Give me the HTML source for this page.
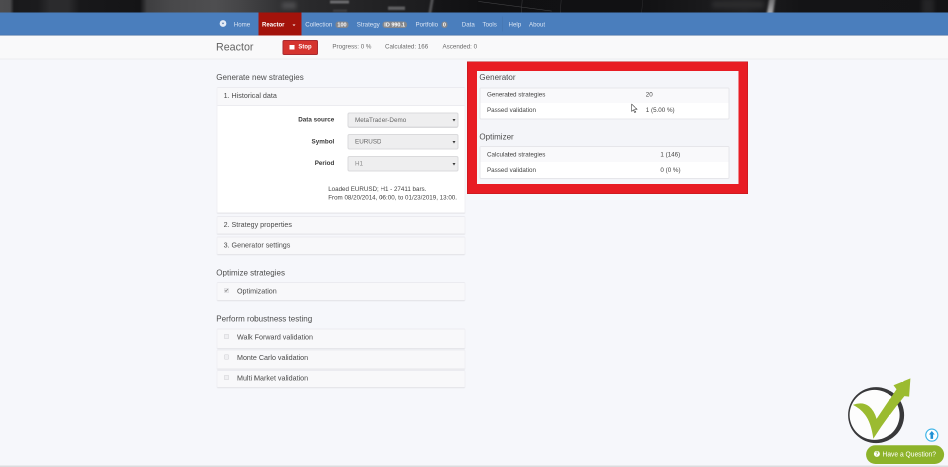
<!DOCTYPE html>
<html lang="en">
<head>
<meta charset="utf-8">
<title>Reactor</title>
<style>
*{box-sizing:border-box;margin:0;padding:0}
html,body{width:948px;height:467px;overflow:hidden}
body{position:relative;background:#f6f7fb;font-family:"Liberation Sans",Arial,sans-serif;color:#444;font-size:6.9px;line-height:1}
.abs{position:absolute;white-space:nowrap}
/* top dark strip */
#top{left:0;top:0;width:948px;height:13px;background:#141416;overflow:hidden}
#top div{position:absolute}
/* nav */
#nav{left:0;top:12.5px;width:948px;height:23px;background:#4a7ebd;box-shadow:inset 0 -0.6px 0 #41699c}
.nv{position:absolute;top:0;height:24px;line-height:24px;color:#d9e4f3;font-size:6.15px;white-space:nowrap}
.bdg{position:absolute;top:8.9px;height:6.4px;line-height:6.5px;border-radius:2.8px;background:#84868b;color:#fff;font-weight:bold;font-size:5.5px;text-align:center}
#sub{left:0;top:35.5px;width:948px;height:24.2px;background:#f9f9fa;border-bottom:1px solid #ececef}
.h1{font-size:10.7px;color:#636363}
.h2{font-size:8.03px;color:#4e4e4e}
.t{font-size:7.15px;color:#4a4a4a}
.d{font-size:6.25px;color:#444}
.st{font-size:6.22px;color:#6a6a6a}
.pnl{left:216.5px;width:249px;background:#f8f8fa;border:1px solid #ebebf0;border-left-color:#f0f0f4;border-right-color:#f0f0f4;border-bottom-color:#e6e6ea;border-radius:1.5px;box-shadow:0 0.5px 0.5px rgba(0,0,0,.04)}
.sel{left:347.5px;width:111px;height:15.4px;background:#eeeeef;border:1px solid #dadadc;border-radius:2px}
.sel span{position:absolute;left:6.5px;top:-0.5px;line-height:14.4px;font-size:6.3px;color:#666}
.sel i{position:absolute;right:1.9px;top:5.7px;width:0;height:0;border-left:1.5px solid transparent;border-right:1.5px solid transparent;border-top:2.6px solid #3a3a3a}
.lbl{font-weight:bold;font-size:6.3px;color:#3a3a3a;right:613.7px}
.cb{width:5px;height:5px;border:0.6px solid #d2d2d6;border-radius:1px;background:#efeff2;left:223.8px}
.tbl{left:479.5px;width:250.2px;background:#fff;border:1px solid #e6e6ea;border-radius:1.5px}
.row1{left:0;top:0;width:100%;height:14.5px;background:#f9f9fb}
#wrap{position:absolute;left:0;top:0;width:1896px;height:934px;transform:scale(.5);transform-origin:0 0;will-change:transform;overflow:hidden}
#z{position:absolute;left:0;top:0;width:948px;height:467px;zoom:2;background:#f6f7fb}
</style>
</head>
<body>
<div id="wrap"><div id="z">

<!-- dark blurred strip -->
<div id="top" class="abs">
  <div style="left:0;top:0;width:948px;height:13px;background:linear-gradient(90deg,#4c4c4e 0,#4a4a4c 10px,#19191b 14px,#1b1b1d 38px,#2b2b2d 50px,#2b2b2d 68px,#18181a 80px,#141416 140px,#3e3e40 147px,#48484a 170px,#4e4e50 215px,#454547 240px,#3a3a3c 262px,#2f2f31 285px,#29292b 310px,#252527 350px,#1f1f21 400px,#1c1c1e 428px,#151517 436px,#101012 480px,#111113 640px,#19191b 700px,#222224 745px,#1a1a1c 765px,#141416 800px,#131315 948px)"></div>
  <div style="left:768px;top:-2px;width:6px;height:17px;background:linear-gradient(180deg,#6a6a6c,#b4b4b6);transform:skewX(-9deg);filter:blur(1px)"></div>
  <div style="left:712px;top:1px;width:52px;height:7px;background:#2c2c2e;filter:blur(2.500px)"></div>
  <div style="left:429.5px;top:-2px;width:3.200px;height:17px;background:#505052;transform:skewX(-10deg);filter:blur(.7px)"></div>
  <div style="left:330px;top:0.5px;width:19px;height:3px;background:#6c6c6e;filter:blur(.9px)"></div>
  <div style="left:388px;top:6.5px;width:17px;height:3.6px;background:#5e5e60;filter:blur(.9px)"></div>
  <div style="left:333px;top:9.5px;width:14px;height:2.5px;background:#3c3c3e;filter:blur(.9px)"></div>
  <div style="left:282px;top:2px;width:14px;height:7px;background:#4c4c4e;filter:blur(2px)"></div>
  <div style="left:478px;top:6.2px;width:74px;height:0.7px;background:#48484a;transform:rotate(7.5deg);filter:blur(.3px)"></div>
  <div style="left:521.6px;top:-2px;width:0.7px;height:16px;background:#3e3e40;transform:skewX(-4deg)"></div>
  <div style="left:560.6px;top:-2px;width:0.7px;height:16px;background:#38383a;transform:skewX(-4deg)"></div>
  <div style="left:642px;top:-2px;width:0.7px;height:16px;background:#2e2e30;transform:skewX(-6deg)"></div>
  <div style="left:922px;top:-2px;width:12px;height:16px;background:#242426;filter:blur(2px)"></div>
</div>

<!-- navbar -->
<div id="nav" class="abs">
  <svg class="abs" style="left:219.7px;top:7.7px" width="7" height="7" viewBox="0 0 14 14"><circle cx="7" cy="7" r="6.7" fill="#e3ebf6"/><path d="M4.4 5.6h5.2L7 8.8z" fill="#4a72a8"/></svg>
  <span class="nv" style="left:233.8px">Home</span>
  <div class="abs" style="left:258.5px;top:0;width:43px;height:23px;background:#a3130b"></div>
  <span class="nv" style="left:262px;color:#fff;font-weight:bold;font-size:6.05px">Reactor</span>
  <i class="abs" style="left:292.7px;top:11.8px;width:0;height:0;border-left:1.7px solid transparent;border-right:1.7px solid transparent;border-top:1.9px solid #fff"></i>
  <span class="nv" style="left:305.3px">Collection</span>
  <span class="bdg" style="left:335.4px;width:13.2px">100</span>
  <span class="nv" style="left:356.8px">Strategy</span>
  <span class="bdg" style="left:382.6px;width:24.2px">ID 990.1</span>
  <span class="nv" style="left:415.5px">Portfolio</span>
  <span class="bdg" style="left:441.3px;width:6.2px">0</span>
  <span class="nv" style="left:461.8px">Data</span>
  <span class="nv" style="left:482.5px">Tools</span>
  <div class="abs" style="left:502.3px;top:4px;width:0.6px;height:15px;background:#4371ab"></div>
  <span class="nv" style="left:508.5px">Help</span>
  <span class="nv" style="left:529px">About</span>
</div>

<!-- sub header -->
<div id="sub" class="abs"></div>
<span class="abs h1" style="left:216px;top:41.8px">Reactor</span>
<div class="abs" style="left:282.3px;top:39.9px;width:35.6px;height:15.2px;background:#d5342f;border:1px solid #a82a30;border-radius:1.6px"></div>
<div class="abs" style="left:289.6px;top:44.8px;width:4.8px;height:4.6px;background:#fff"></div>
<span class="abs" style="left:298.4px;top:43.9px;font-size:5.95px;font-weight:bold;color:#fff">Stop</span>
<span class="abs st" style="left:332.4px;top:43.6px">Progress: 0 %</span>
<span class="abs st" style="left:385px;top:43.6px">Calculated: 166</span>
<span class="abs st" style="left:442.5px;top:43.6px">Ascended: 0</span>

<!-- left column -->
<span class="abs h2" style="left:216.3px;top:72.95px">Generate new strategies</span>

<div class="abs pnl" style="top:87px;height:126.7px;background:#fff"></div>
<div class="abs" style="left:217.5px;top:88px;width:247px;height:18px;background:#f8f8fa;border-bottom:1px solid #ececf0"></div>
<span class="abs t" style="left:223.6px;top:92.10px">1. Historical data</span>

<span class="abs lbl" style="top:116.60px">Data source</span>
<div class="abs sel" style="top:112.3px"><span>MetaTrader-Demo</span><i></i></div>
<span class="abs lbl" style="top:138.30px">Symbol</span>
<div class="abs sel" style="top:134.1px"><span>EURUSD</span><i></i></div>
<span class="abs lbl" style="top:160.10px">Period</span>
<div class="abs sel" style="top:156.1px"><span style="color:#888">H1</span><i></i></div>

<span class="abs" style="left:328.2px;top:186.10px;font-size:6.23px;color:#444">Loaded EURUSD; H1 - 27411 bars.</span>
<span class="abs" style="left:328.2px;top:194.30px;font-size:6.23px;color:#444">From 08/20/2014, 06:00, to 01/23/2019, 13:00.</span>

<div class="abs pnl" style="top:216.2px;height:18.4px"></div>
<span class="abs t" style="left:223.6px;top:221.10px">2. Strategy properties</span>
<div class="abs pnl" style="top:236.4px;height:18.4px"></div>
<span class="abs t" style="left:223.6px;top:241.35px">3. Generator settings</span>

<span class="abs h2" style="left:216.3px;top:268.30px">Optimize strategies</span>
<div class="abs pnl" style="top:282.2px;height:18.6px"></div>
<div class="abs cb" style="top:288px"></div>
<svg class="abs" style="left:224.2px;top:288.2px" width="4.6" height="4.6" viewBox="0 0 10 10"><path d="M2 5.2l2.2 2.4L8.2 2.4" fill="none" stroke="#777" stroke-width="1.6"/></svg>
<span class="abs t" style="left:237px;top:287.55px">Optimization</span>

<span class="abs h2" style="left:216.3px;top:314.45px">Perform robustness testing</span>
<div class="abs pnl" style="top:328.4px;height:20.4px"></div>
<div class="abs cb" style="top:333.8px"></div>
<span class="abs t" style="left:237px;top:333.50px">Walk Forward validation</span>
<div class="abs pnl" style="top:349.5px;height:19.8px"></div>
<div class="abs cb" style="top:354.4px"></div>
<span class="abs t" style="left:237px;top:353.80px">Monte Carlo validation</span>
<div class="abs pnl" style="top:369.9px;height:18px"></div>
<div class="abs cb" style="top:374.8px"></div>
<span class="abs t" style="left:237px;top:374.30px">Multi Market validation</span>

<!-- red highlight frame -->
<div class="abs" style="left:466.8px;top:61.25px;width:281.2px;height:132.55px;background:#e81c24;box-shadow:inset 0 0 0 0.5px #b8181e"></div>
<div class="abs" style="left:477px;top:71px;width:261.25px;height:112.75px;background:#f4f5f9"></div>

<span class="abs h2" style="left:479.4px;top:72.80px">Generator</span>
<div class="abs tbl" style="top:87.3px;height:32.2px"><div class="abs row1"></div></div>
<span class="abs d" style="left:487px;top:91.30px">Generated strategies</span>
<span class="abs d" style="left:645.8px;top:91.30px">20</span>
<span class="abs d" style="left:487px;top:106.80px">Passed validation</span>
<span class="abs d" style="left:645.8px;top:106.80px">1 (5.00 %)</span>

<span class="abs h2" style="left:479.4px;top:132.45px">Optimizer</span>
<div class="abs tbl" style="top:146.2px;height:33px"><div class="abs row1" style="height:15px"></div></div>
<span class="abs d" style="left:487px;top:151.55px">Calculated strategies</span>
<span class="abs d" style="left:660.4px;top:151.55px">1 (146)</span>
<span class="abs d" style="left:487px;top:166.80px">Passed validation</span>
<span class="abs d" style="left:660.4px;top:166.80px">0 (0 %)</span>

<!-- mouse cursor -->
<svg class="abs" style="left:631px;top:103.6px" width="7.2" height="10" viewBox="0 0 12 17"><path d="M1 1v12.500l3.100-2.800 2.100 4.800 1.900-.9-2.100-4.600H10.300z" fill="#fff" stroke="#3a3a3a" stroke-width="1" stroke-linejoin="round"/></svg>

<!-- logo -->
<svg class="abs" style="left:838px;top:370px" width="110" height="97" viewBox="838 370 110 97">
  <circle cx="876.1" cy="415.1" r="28" fill="#38383a"/>
  <circle cx="874.6" cy="414.9" r="25" fill="#fdfdfd"/>
  <path d="M910.4 378.4L909.1 396.6L904.4 396.1Q887.5 416.500 873.3 438.7Q871.200 422.500 865 414.6Q860 408.200 852.9 404.9Q862.300 401.200 869 406.2Q874.300 410.500 876.6 418.9L896.5 389.3L893.5 385.2Z" fill="#9bbb30"/>
  <circle cx="931.8" cy="435.1" r="6.9" fill="#d4eefb"/>
  <circle cx="931.8" cy="435.1" r="6" fill="#fff" stroke="#3bb2e6" stroke-width="1.1"/>
  <path d="M931.8 431l2.9 3.500h-1.600v4.400h-2.600v-4.400h-1.600z" fill="#2191d5"/>
  <rect x="866.1" y="445.2" width="78" height="18.800" rx="9.400" fill="#8db32a"/>
  <circle cx="876.9" cy="453.900" r="3" fill="#fff"/>
  <text x="876.9" y="455.700" font-family="Liberation Sans, Arial, sans-serif" font-size="5" font-weight="bold" fill="#8db32a" text-anchor="middle">?</text>
  <text x="882.500" y="456.700" font-family="Liberation Sans, Arial, sans-serif" font-size="6.900" fill="#fff" textLength="53.500" lengthAdjust="spacingAndGlyphs">Have a Question?</text>
</svg>

<div class="abs" style="left:0;top:465.6px;width:948px;height:1.4px;background:#dcdcde"></div>
</div></div>
</body>
</html>
